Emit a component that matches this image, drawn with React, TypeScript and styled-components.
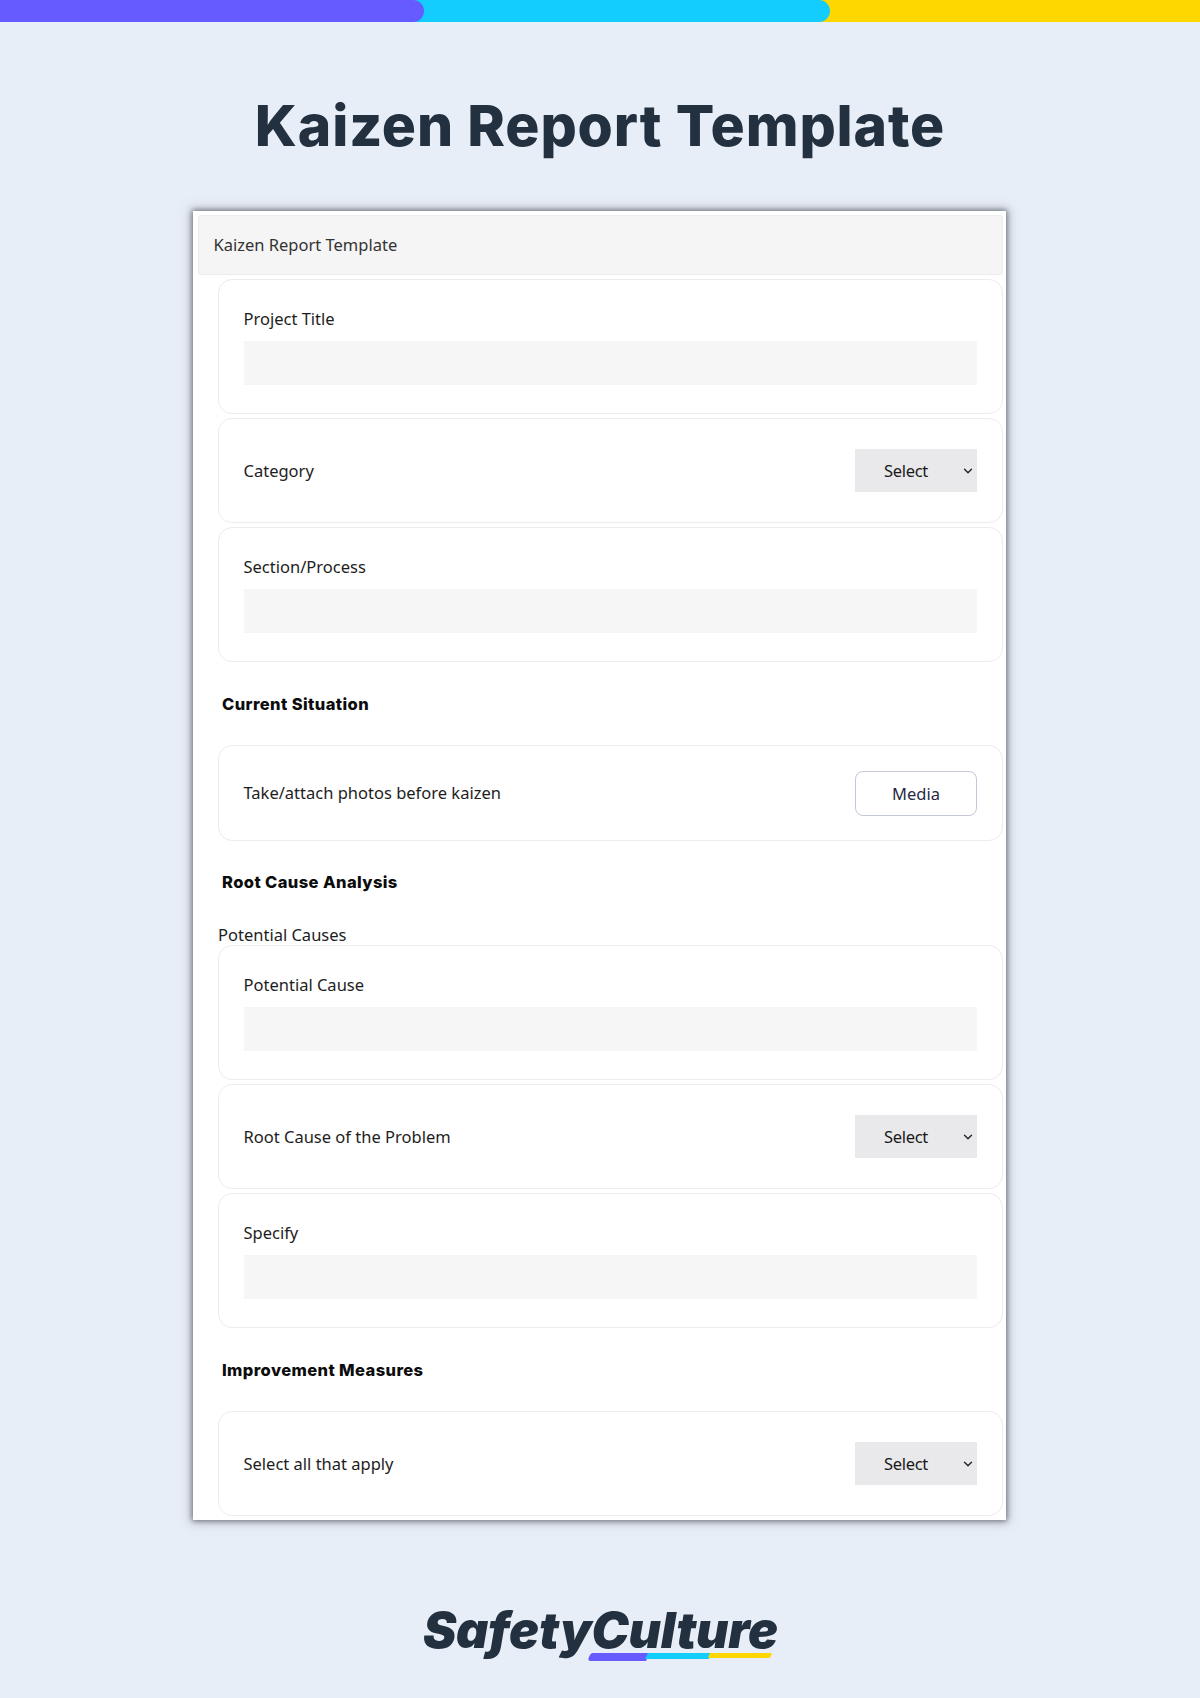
import React from "react";
import styled, { createGlobalStyle } from "styled-components";
import { ChevronDown } from "lucide-react";

const Global = createGlobalStyle`
  html, body { margin: 0; padding: 0; background: #e8eef7; }
  body { font-family: "Noto Sans", "Open Sans", sans-serif; }
`;

const Page = styled.div`
  width: 1200px;
  height: 1698px;
  overflow: hidden;
  display: flex;
  flex-direction: column;
  background: #e8eef7;
`;

const TopBar = styled.div`
  height: 22px;
  display: flex;
  background: #ffd700;
`;

const BarSegment = styled.div<{ $color: string; $width: number; $z: number }>`
  width: ${(p) => p.$width}px;
  margin-left: ${(p) => (p.$z === 2 ? 0 : -12)}px;
  padding-left: 12px;
  box-sizing: border-box;
  background: ${(p) => p.$color};
  border-radius: 0 11px 11px 0;
  z-index: ${(p) => p.$z};
`;

const PageTitle = styled.h1`
  margin: 0;
  height: 189px;
  box-sizing: border-box;
  padding-top: 63px;
  text-align: center;
  font-family: Inter, "Liberation Sans", sans-serif;
  font-weight: 800;
  font-size: 57px;
  line-height: 82px;
  letter-spacing: 0.85px;
  color: #22303f;
`;

const Card = styled.main`
  width: 813px;
  height: 1309px;
  margin-left: 193px;
  box-sizing: border-box;
  padding: 4px 3px 4px 4.5px;
  background: #fff;
  box-shadow: 0 0 6px 1px rgba(80, 86, 96, 0.85), 0 0 12px 3px rgba(110, 118, 130, 0.22);
  overflow: hidden;
`;

const Header = styled.header`
  height: 60px;
  box-sizing: border-box;
  display: flex;
  align-items: center;
  padding: 0 0 1px 15px;
  background: #f5f5f5;
  border: 1px solid #ececec;
  border-radius: 3px;
  font-size: 16.5px;
  color: #333;
`;

const Body = styled.div`
  padding-left: 20.5px;
  padding-top: 4px;
  display: flex;
  flex-direction: column;
  gap: 4px;
`;

const Item = styled.section`
  box-sizing: border-box;
  padding: 27px 25px 28px 24.5px;
  border: 1px solid #ececec;
  border-radius: 14px;
  background: #fff;
`;

const RowItem = styled(Item)`
  display: flex;
  align-items: center;
  justify-content: space-between;
  height: ${(p: { $h?: number }) => p.$h ?? 105}px;
  padding-top: 0;
  padding-bottom: 0;
`;

const Label = styled.div`
  font-size: 16.5px;
  line-height: 24px;
  color: #1d1d1d;
`;

const TextInput = styled.div`
  height: 44px;
  margin-top: 10px;
  background: #f6f6f6;
`;

const SelectBox = styled.div`
  width: 122px;
  height: 43px;
  box-sizing: border-box;
  display: flex;
  align-items: center;
  justify-content: space-between;
  padding: 0 2px 0 29px;
  background: #e9e9ec;
  font-size: 16.5px;
  color: #1a1a1a;
  letter-spacing: -0.3px;
`;

const MediaButton = styled.div`
  width: 122px;
  height: 45px;
  box-sizing: border-box;
  display: flex;
  align-items: center;
  justify-content: center;
  border: 1.5px solid #c3c8d8;
  border-radius: 8px;
  background: #fff;
  font-size: 16.5px;
  color: #1f2a44;
`;

const SectionHeading = styled.h2<{ $h: number }>`
  margin: 0;
  height: ${(p) => p.$h}px;
  display: flex;
  align-items: center;
  padding-left: 4px;
  font-family: Inter, "Liberation Sans", sans-serif;
  font-weight: 800;
  font-size: 16.5px;
  letter-spacing: 0.4px;
  color: #0c0c0c;
`;

const SubHeading = styled.div`
  font-size: 16.5px;
  line-height: 22px;
  margin-top: 1px;
  margin-bottom: -5px;
  color: #1d1d1d;
`;

const Footer = styled.footer`
  flex: 1;
  display: flex;
  justify-content: center;
  padding-top: 80px;
`;

const Logo = styled.div`
  position: relative;
  width: 354px;
  height: 60px;
`;

const LogoText = styled.span`
  display: block;
  font-family: Inter, "Liberation Sans", sans-serif;
  font-weight: 900;
  font-style: italic;
  font-size: 50px;
  line-height: 60px;
  letter-spacing: -0.25px;
  color: #22303f;
  white-space: nowrap;
  text-align: center;
`;

const LogoSwoosh = styled.svg`
  position: absolute;
  left: 164.5px;
  top: 53px;
`;

const Select = () => (
  <SelectBox>
    Select
    <ChevronDown size={14} strokeWidth={2.4} color="#222" />
  </SelectBox>
);

const FieldItem = ({ label }: { label: string }) => (
  <Item>
    <Label>{label}</Label>
    <TextInput />
  </Item>
);

const SelectItem = ({ label }: { label: string }) => (
  <RowItem>
    <Label>{label}</Label>
    <Select />
  </RowItem>
);

export default function App() {
  return (
    <Page>
      <Global />
      <TopBar>
        <BarSegment $color="#655bff" $width={424} $z={2} />
        <BarSegment $color="#14cdff" $width={418} $z={1} />
      </TopBar>
      <PageTitle>Kaizen Report Template</PageTitle>
      <Card>
        <Header>Kaizen Report Template</Header>
        <Body>
          <FieldItem label="Project Title" />
          <SelectItem label="Category" />
          <FieldItem label="Section/Process" />
          <SectionHeading $h={75}>Current Situation</SectionHeading>
          <RowItem $h={96}>
            <Label>Take/attach photos before kaizen</Label>
            <MediaButton>Media</MediaButton>
          </RowItem>
          <SectionHeading $h={74}>Root Cause Analysis</SectionHeading>
          <SubHeading>Potential Causes</SubHeading>
          <FieldItem label="Potential Cause" />
          <SelectItem label="Root Cause of the Problem" />
          <FieldItem label="Specify" />
          <SectionHeading $h={75}>Improvement Measures</SectionHeading>
          <SelectItem label="Select all that apply" />
        </Body>
      </Card>
      <Footer>
        <Logo>
          <LogoText>SafetyCulture</LogoText>
          <LogoSwoosh width="184" height="9" viewBox="0 0 184 9">
            <path d="M5 0H62L58 8H3C0 8 0 6 1 4C2 2 3 0 5 0Z" fill="#655bff" />
            <path d="M60 0H124L121 6H57Z" fill="#14cdff" />
            <path d="M122 0H182C184 0 184 1 183 3C182 5 181 5 180 5H120Z" fill="#ffd700" />
          </LogoSwoosh>
        </Logo>
      </Footer>
    </Page>
  );
}
